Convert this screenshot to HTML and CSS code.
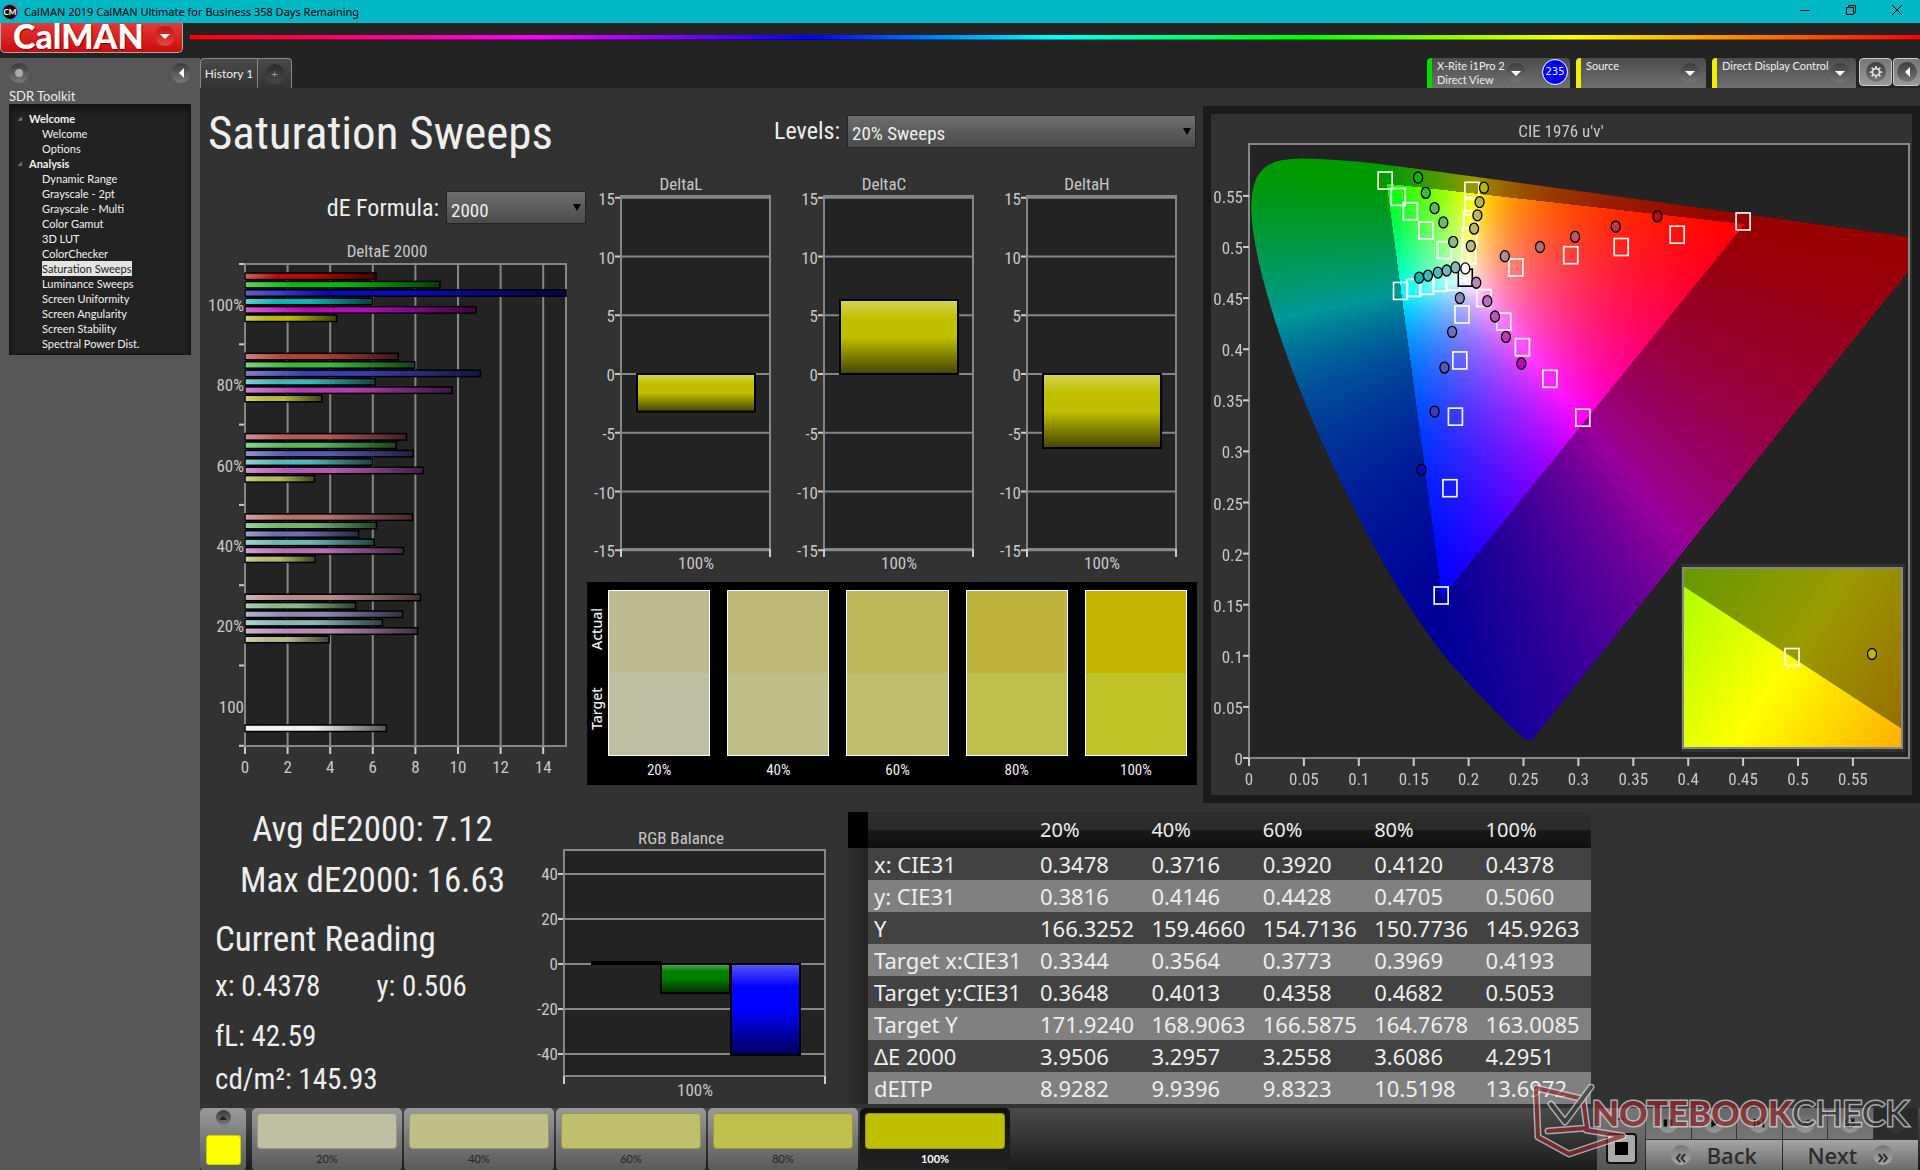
FILE: index.html
```
<!DOCTYPE html>
<html lang="en">
<head>
  <meta charset="UTF-8" />
  <meta name="viewport" content="width=device-width, initial-scale=1.0" />
  <title>CalMAN 2019 CalMAN Ultimate for Business</title>
  <link rel="stylesheet" href="styles.css">
</head>
<body>

<header class="titlebar">
  <svg class="app-icon" viewBox="0 0 16 16" aria-hidden="true">
    <circle cx="8" cy="8" r="8" fill="#7a4fd0"/>
    <path d="M8 0a8 8 0 0 1 8 8H8z" fill="#d8508a"/>
    <path d="M0 8a8 8 0 0 0 8 8V8z" fill="#3fb86a"/>
    <circle cx="8" cy="8" r="7" fill="#111"/>
    <text x="8" y="11" text-anchor="middle">CM</text>
  </svg>
  <span class="titlebar-text">CalMAN 2019 CalMAN Ultimate for Business 358 Days Remaining</span>
  <div class="window-buttons">
    <button aria-label="Minimize"><svg viewBox="0 0 12 12"><path d="M1 6.500h10"/></svg></button>
    <button aria-label="Restore"><svg viewBox="0 0 12 12"><path d="M1.500 3.500h7v7h-7zM3.500 3.500v-2h7v7h-2"/></svg></button>
    <button aria-label="Close"><svg viewBox="0 0 12 12"><path d="M1 1l10 10M11 1L1 11"/></svg></button>
  </div>
</header>

<div class="brandbar">
  <button class="brand">CalMAN<span class="round red"><i class="tri down"></i></span></button>
  <div class="rainbow"></div>
</div>

<div class="main">
  <aside class="sidebar">
    <div class="sidebar-top">
      <span class="round"><i class="dot"></i></span>
      <button class="round" aria-label="Collapse"><i class="tri left"></i></button>
    </div>
    <h2>SDR Toolkit</h2>
    <nav class="tree">
      <h3>Welcome</h3>
      <a href="#">Welcome</a>
      <a href="#">Options</a>
      <h3>Analysis</h3>
      <a href="#">Dynamic Range</a>
      <a href="#">Grayscale - 2pt</a>
      <a href="#">Grayscale - Multi</a>
      <a href="#">Color Gamut</a>
      <a href="#">3D LUT</a>
      <a href="#">ColorChecker</a>
      <a href="#" class="active">Saturation Sweeps</a>
      <a href="#">Luminance Sweeps</a>
      <a href="#">Screen Uniformity</a>
      <a href="#">Screen Angularity</a>
      <a href="#">Screen Stability</a>
      <a href="#">Spectral Power Dist.</a>
    </nav>
  </aside>

  <div class="content">
    <div class="tabs">
      <button class="tab">History 1</button>
      <button class="tab tab-add" aria-label="Add tab"><span class="round">+</span></button>
      <div class="devices">
        <button class="device meter"><span>X-Rite i1Pro 2<br>Direct View</span><span class="round"><i class="tri down"></i></span><b>235</b></button>
        <button class="device source"><span>Source</span><span class="round"><i class="tri down"></i></span></button>
        <button class="device display"><span>Direct Display Control</span><span class="round"><i class="tri down"></i></span></button>
        <button class="tool" aria-label="Settings"><span class="round"><svg viewBox="0 0 16 16"><circle cx="8" cy="8" r="4" fill="none" stroke="#ddd" stroke-width="2"/><path d="M8 1v3M8 12v3M1 8h3M12 8h3M3 3l2 2M11 11l2 2M13 3l-2 2M5 11l-2 2" stroke="#ddd" stroke-width="2"/></svg></span></button>
        <button class="tool tool-end" aria-label="Collapse panel"><span class="round"><i class="tri left"></i></span></button>
      </div>
    </div>

    <div class="workspace">
      <div class="upper">
        <div class="sweeps">
          <div class="heading">
            <h1>Saturation Sweeps</h1>
            <div class="field levels">
              <label for="levels">Levels:</label>
              <div class="select"><select id="levels"><option>20% Sweeps</option></select></div>
            </div>
          </div>
          <div class="sweep-columns">
            <div class="col-delta-e">
              <div class="field formula">
                <label for="formula">dE Formula:</label>
                <div class="select"><select id="formula"><option>2000</option></select></div>
              </div>
              <svg id="deltaE" class="chart" viewBox="0 0 387 549"></svg>
            </div>
            <div class="col-lch">
              <svg id="deltaLCH" class="chart" viewBox="0 0 616 403"></svg>
              <div class="swatches">
                <div class="swatch-side"><span>Actual</span><span>Target</span></div>
                <figure><div class="swatch s20"></div><figcaption>20%</figcaption></figure>
                <figure><div class="swatch s40"></div><figcaption>40%</figcaption></figure>
                <figure><div class="swatch s60"></div><figcaption>60%</figcaption></figure>
                <figure><div class="swatch s80"></div><figcaption>80%</figcaption></figure>
                <figure><div class="swatch s100"></div><figcaption>100%</figcaption></figure>
              </div>
            </div>
          </div>
        </div>
        <div class="cie">
          <canvas id="cieColors" width="701" height="681"></canvas>
          <svg id="cieChart" class="chart" viewBox="0 0 701 681"></svg>
        </div>
      </div>

      <div class="lower">
        <div class="readings">
          <p class="big center">Avg dE2000: 7.12</p>
          <p class="big center">Max dE2000: 16.63</p>
          <p class="big current">Current Reading</p>
          <p class="xy"><span>x: 0.4378</span><span>y: 0.506</span></p>
          <p class="fl">fL: 42.59</p>
          <p>cd/m²: 145.93</p>
        </div>
        <svg id="rgbBalance" class="chart" viewBox="0 0 318 305"></svg>
        <table class="data">
          <thead>
            <tr><th class="grip"></th><th class="name"></th><th>20%</th><th>40%</th><th>60%</th><th>80%</th><th>100%</th></tr>
          </thead>
          <tbody>
            <tr><td class="grip"></td><th>x: CIE31</th><td>0.3478</td><td>0.3716</td><td>0.3920</td><td>0.4120</td><td>0.4378</td></tr>
            <tr><td class="grip"></td><th>y: CIE31</th><td>0.3816</td><td>0.4146</td><td>0.4428</td><td>0.4705</td><td>0.5060</td></tr>
            <tr><td class="grip"></td><th>Y</th><td>166.3252</td><td>159.4660</td><td>154.7136</td><td>150.7736</td><td>145.9263</td></tr>
            <tr><td class="grip"></td><th>Target x:CIE31</th><td>0.3344</td><td>0.3564</td><td>0.3773</td><td>0.3969</td><td>0.4193</td></tr>
            <tr><td class="grip"></td><th>Target y:CIE31</th><td>0.3648</td><td>0.4013</td><td>0.4358</td><td>0.4682</td><td>0.5053</td></tr>
            <tr><td class="grip"></td><th>Target Y</th><td>171.9240</td><td>168.9063</td><td>166.5875</td><td>164.7678</td><td>163.0085</td></tr>
            <tr><td class="grip"></td><th>ΔE 2000</th><td>3.9506</td><td>3.2957</td><td>3.2558</td><td>3.6086</td><td>4.2951</td></tr>
            <tr><td class="grip"></td><th>dEITP</th><td>8.9282</td><td>9.9396</td><td>9.8323</td><td>10.5198</td><td>13.6972</td></tr>
          </tbody>
        </table>
      </div>
    </div>

    <footer class="bottombar">
      <button class="pattern-toggle" aria-label="Pattern"><span class="round"><i class="tri up"></i></span><i class="chip"></i></button>
      <button class="level l20"><i></i>20%</button>
      <button class="level l40"><i></i>40%</button>
      <button class="level l60"><i></i>60%</button>
      <button class="level l80"><i></i>80%</button>
      <button class="level l100 active"><i></i>100%</button>
      <div class="controls">
        <button class="stop" aria-label="Stop"><i class="tri up"></i><span><i></i></span></button>
        <div class="control-grid">
          <div class="transport">
            <button aria-label="Pause"><span class="round"><svg viewBox="0 0 16 16"><path d="M3 4h4v8H3zM9 4h4v8H9z"/></svg></span></button>
            <button aria-label="Read"><span class="round"><svg viewBox="0 0 16 16"><path d="M5 3l8 5-8 5z"/></svg></span></button>
            <button aria-label="Read series"><span class="round"><svg viewBox="0 0 16 16"><path d="M2 3h2v10H2zM12 3h2v10h-2zM6 4l4 4-4 4z"/></svg></span></button>
            <button aria-label="Continuous"><span class="round"><svg viewBox="0 0 16 16"><path d="M8 8C5 3 1 5 1 8s4 5 7 0 7-3 7 0-4 5-7 0z" fill="none" stroke="#333" stroke-width="2"/></svg></span></button>
            <button aria-label="Refresh"><span class="round"><svg viewBox="0 0 16 16"><path d="M3 8a5 5 0 0 1 9-3M13 8a5 5 0 0 1-9 3" fill="none" stroke="#333" stroke-width="2"/><path d="M13 2v5H8zM3 14V9h5z"/></svg></span></button>
            <button class="off" aria-label="Empty"><span class="round"></span></button>
          </div>
          <div class="steps">
            <button><span class="round">«</span>Back</button>
            <button>Next<span class="round">»</span></button>
          </div>
        </div>
      </div>
    </footer>
  </div>
</div>

<svg class="watermark" viewBox="0 0 390 86">
  <g fill="none" stroke-linejoin="round" stroke-linecap="round">
    <path d="M53 15L6 4l2 49 31 17 54-18-37-6M53 15l4 29-39 3" stroke="#ddd" stroke-width="7"/>
    <path d="M53 15L6 4l2 49 31 17 54-18-37-6M53 15l4 29-39 3" stroke="#8f2a2e" stroke-width="4"/>
    <path d="M21 20l14 18 26-35" stroke="#ddd" stroke-width="7"/>
    <path d="M21 20l14 18 26-35" stroke="#3c3c3c" stroke-width="4"/>
  </g>
  <text x="62" y="42" class="wm-notebook">NOTEBOOK</text>
  <text x="262" y="42" class="wm-check">CHECK</text>
</svg>

<script src="script.js"></script>
</body>
</html>
```
FILE: styles.css
```
* {
  box-sizing: border-box;
}
body {
  margin: 0;
  min-height: 100vh;
  display: flex;
  flex-direction: column;
  background: #232323;
  color: #eee;
  font-family: Lato, sans-serif;
  font-size: 12px;
  overflow-x: hidden;
  position: relative;
}
h1, h2, h3, p, figure {
  margin: 0;
  font-weight: normal;
}
button {
  font: inherit;
  color: inherit;
  border: 0;
  padding: 0;
  background: none;
}

/* window title */
.titlebar {
  height: 23px;
  display: flex;
  align-items: center;
  background: #00b7c6;
  color: #000;
  font-family: "Noto Sans", sans-serif;
  font-size: 11px;
  padding-left: 2px;
}
.app-icon {
  width: 16px;
  height: 16px;
  margin-right: 6px;
}
.app-icon text {
  font: bold 8px Lato, sans-serif;
  fill: #fff;
}
.window-buttons {
  margin-left: auto;
  display: flex;
}
.window-buttons button {
  width: 46px;
  height: 23px;
}
.window-buttons svg {
  width: 12px;
  height: 12px;
  fill: none;
  stroke: #000;
}

/* logo and rainbow line */
.brandbar {
  height: 35px;
  display: flex;
}
.brand {
  width: 183px;
  height: 30px;
  display: flex;
  align-items: center;
  justify-content: space-between;
  padding: 0 7px 3px 12px;
  border: 1px solid #aaa;
  border-top: 0;
  border-radius: 0 0 5px 5px;
  background: linear-gradient(#e23a3a, #cc0c0c);
  color: #fff;
  font-family: Lato, sans-serif;
  font-weight: 900;
  font-size: 34px;
  line-height: 26px;
  text-shadow: 1px 1px 1px #800;
}
.rainbow {
  flex: 1;
  height: 5px;
  margin: 12px 0 0 7px;
  background: linear-gradient(to right, #f00, #f0f 20%, #00f 36%, #0ff 50%, #0f0 64%, #ff0 80%, #f00);
  border-bottom: 1px solid rgba(0, 0, 0, 0.4);
}

/* little round buttons with arrows */
.round {
  width: 20px;
  height: 20px;
  flex: none;
  display: inline-flex;
  align-items: center;
  justify-content: center;
  border-radius: 50%;
  background: linear-gradient(#3c3c3c, #777);
}
.round.red {
  background: linear-gradient(#b81414, #e64545);
}
.round svg {
  width: 14px;
  height: 14px;
}
.tri {
  border: 5px solid transparent;
}
.tri.down {
  border-top-color: #fff;
  border-bottom-width: 0;
}
.tri.up {
  border-width: 4px;
  border-bottom-color: #222;
  border-top-width: 0;
}
.tri.left {
  border-right-color: #fff;
  border-left-width: 0;
}
.dot {
  width: 8px;
  height: 8px;
  border-radius: 50%;
  background: #aaa;
}

/* sidebar */
.main {
  flex: 1;
  display: flex;
}
.sidebar {
  width: 200px;
  flex: none;
  background: #575757;
  padding: 5px 9px;
}
.sidebar-top {
  display: flex;
  justify-content: space-between;
}
.sidebar h2 {
  font-size: 13px;
  line-height: 16px;
  margin-top: 5px;
}
.tree {
  height: 251px;
  width: 182px;
  padding: 6px 0 0 32px;
  background: #222;
  border: 1px solid #161616;
  box-shadow: inset 0 4px 6px #111;
}
.tree h3,
.tree a {
  display: block;
  width: fit-content;
  font-size: 11px;
  line-height: 15px;
  color: #f2f2f2;
  text-decoration: none;
}
.tree h3 {
  font-weight: bold;
  margin-left: -13px;
}
.tree h3::before {
  content: "◢";
  float: left;
  margin-left: -11px;
  font-size: 5px;
  color: #777;
}
.tree .active {
  background: #e4e4e4;
  color: #222;
}

/* tab row */
.content {
  flex: 1;
  min-width: 0;
  display: flex;
  flex-direction: column;
}
.tabs {
  height: 30px;
  display: flex;
}
.tab {
  width: 58px;
  border: 1px solid #888;
  border-bottom: 0;
  border-radius: 4px 0 0 0;
  background: linear-gradient(#4a4a4a, #333);
}
.tab-add {
  width: 34px;
  border-left: 0;
  border-radius: 0 4px 0 0;
  color: #999;
}
.tab-add .round {
  background: linear-gradient(#2c2c2c, #484848);
}
.devices {
  margin-left: auto;
  display: flex;
  gap: 6px;
}
.device {
  width: 130px;
  display: flex;
  align-items: flex-start;
  justify-content: space-between;
  padding: 1px 6px 0 5px;
  border-left: 5px solid #ee0;
  border-radius: 4px 4px 0 0;
  background: linear-gradient(#4c4c4c, #707070);
  font-size: 11px;
  line-height: 14px;
  text-align: left;
}
.device .round {
  margin-top: 4px;
}
.display {
  width: 144px;
}
.meter {
  width: 143px;
  border-left-color: #0d0;
  padding-right: 2px;
}
.meter .round {
  margin-left: auto;
  margin-right: 16px;
}
.meter b {
  width: 26px;
  height: 26px;
  border: 1px solid #fff;
  border-radius: 50%;
  background: #00f;
  font: 10px/24px "DejaVu Sans", sans-serif;
  text-align: center;
}
.tool {
  width: 33px;
  height: 28px;
  border: 1px solid #ccc;
  border-radius: 4px;
  background: linear-gradient(#777, #999);
  margin-left: -3px;
}
.tool-end {
  width: 27px;
  margin-left: -5px;
  border-right: 0;
}

/* workspace */
.workspace {
  flex: 1;
  background: #323232;
  font-family: "Roboto Condensed", Roboto, sans-serif;
}
.upper {
  display: grid;
  grid-template-columns: 1003fr 717fr;
  align-items: start;
}
.heading {
  display: flex;
  align-items: center;
  justify-content: space-between;
  padding: 14px 7px 0 8px;
  height: 72px;
}
h1 {
  padding-top: 3px;
  font-size: 47px;
  line-height: 55px;
}
.field {
  display: flex;
  align-items: center;
  justify-content: flex-end;
  gap: 7px;
  font-size: 24px;
}
.levels {
  width: 43%;
}
.levels .select {
  flex: 1;
}
.formula {
  padding-right: 1px;
}
.formula .select {
  width: 140px;
}
.select {
  position: relative;
}
.select::after {
  content: "";
  position: absolute;
  right: 5px;
  top: 13px;
  border: 4px solid transparent;
  border-top: 7px solid #000;
  border-bottom-width: 0;
}
.levels .select {
  max-width: 349px;
}
select {
  appearance: none;
  width: 100%;
  height: 33px;
  padding: 5px 4px 0;
  border: 1px solid #242424;
  border-radius: 0;
  background: linear-gradient(#6e6e6e, #4a4a4a);
  color: #eee;
  font-family: inherit;
  font-size: 19px;
}
.chart {
  display: block;
  width: 100%;
  height: auto;
}
.chart text {
  font-size: 17px;
  fill: #c8c8c8;
}
.sweep-columns {
  display: grid;
  grid-template-columns: 387fr 616fr;
}
.col-delta-e {
  padding-top: 31px;
}
.col-delta-e .chart {
  margin-top: 12px;
}
.col-lch {
  padding-top: 12px;
}
.swatches {
  display: flex;
  gap: 17px;
  height: 203px;
  margin: 7px 6px 0 0;
  padding: 8px 10px 0 0;
  background: #000;
}
.swatch-side {
  width: 21px;
  margin-right: -17px;
  padding-top: 37px;
  writing-mode: vertical-rl;
  transform: rotate(180deg);
  display: flex;
  flex-direction: row-reverse;
  justify-content: space-around;
  font: 500 14px "Noto Sans", sans-serif;
}
.swatches figure {
  flex: 1;
  text-align: center;
}
.swatch {
  height: 166px;
  border: 1px solid #fff;
  background: linear-gradient(var(--actual) 50%, var(--target) 50%);
}
.swatches figcaption {
  font-size: 15px;
  line-height: 28px;
}
.s20 { --actual: #bfbb90; --target: #bfbfa4; }
.s40 { --actual: #c0b877; --target: #c0bf88; }
.s60 { --actual: #c0b65c; --target: #bfbf6c; }
.s80 { --actual: #c0b43c; --target: #bfc04c; }
.s100 { --actual: #c2b400; --target: #c1c228; }
.cie {
  position: relative;
  margin-top: 18px;
  border: 8px solid #1a1a1a;
}
.cie canvas {
  position: absolute;
  width: 100%;
  height: 100%;
}
.cie .chart {
  position: relative;
}

/* readings and table */
.lower {
  display: grid;
  grid-template-columns: 330fr 318fr 743fr 329fr;
  align-items: start;
}
.readings {
  padding: 1px 0 0 15px;
  font-size: 29px;
  line-height: 43px;
}
.readings .big {
  font-size: 35px;
  line-height: 51px;
}
.center {
  text-align: center;
}
.readings .current {
  margin-top: 8px;
}
.xy {
  display: flex;
  gap: 56px;
}
.fl {
  margin-top: 7px;
}
.data {
  width: 100%;
  margin-top: 9px;
  border-collapse: collapse;
  table-layout: fixed;
  font: 22px/32px "Noto Sans", sans-serif;
}
.data th,
.data td {
  padding: 0 0 0 6px;
  height: 32px;
  font-weight: normal;
  text-align: left;
  white-space: nowrap;
}
.data thead th {
  height: 36px;
  font-size: 20px;
  background: linear-gradient(#2e2e2e, #2a2a2a 49%, #181818 50%, #101010);
}
.data .grip {
  width: 20px;
  background: linear-gradient(to right, #2e2e2e, #242424);
}
.data thead .grip {
  background: #000;
}
.data .name {
  width: 166px;
}
.data tbody tr {
  background: #424242;
}
.data tbody tr:nth-child(even) {
  background: #808080;
}

/* bottom bar */
.bottombar {
  height: 62px;
  display: flex;
  gap: 2px;
  background: linear-gradient(#4a4a4a, #1c1c1c);
}
.bottombar > button {
  border-radius: 5px 5px 3px 3px;
  background: linear-gradient(#999, #5a5a5a);
}
.pattern-toggle {
  width: 46px;
  margin-right: 4px;
  display: flex;
  flex-direction: column;
  align-items: center;
  justify-content: space-between;
  padding: 2px 0 5px;
}
.pattern-toggle .round {
  width: 15px;
  height: 15px;
}
.chip {
  width: 35px;
  height: 30px;
  border-radius: 3px;
  background: #ff0;
  border: 1px solid #cc0;
}
.level {
  width: 150px;
  padding: 2px 5px;
  color: #222;
  font-size: 11px;
}
.level i {
  display: block;
  height: 36px;
  margin-bottom: 3px;
  border-radius: 4px;
  border: 1px solid rgba(0, 0, 0, 0.2);
}
.l20 i { background: #bfbfa4; }
.l40 i { background: #c0bf88; }
.l60 i { background: #bfbf6c; }
.l80 i { background: #bfc04c; }
.l100 i { background: #bfbf00; }
.bottombar .level.active {
  background: linear-gradient(#111, #222);
  color: #fff;
  font-weight: bold;
}
.controls {
  margin-left: auto;
  display: flex;
  padding-right: 2px;
  gap: 1px;
}
.stop {
  width: 48px;
  display: flex;
  flex-direction: column;
  align-items: center;
  justify-content: space-between;
  padding: 8px 0 6px;
  background: linear-gradient(#777, #555);
}
.stop span {
  width: 31px;
  height: 31px;
  padding: 7px;
  border: 2px solid #111;
  border-radius: 4px;
  background: #aaa;
}
.stop span i {
  display: block;
  height: 13px;
  background: #000;
}
.control-grid {
  width: 272px;
  display: flex;
  flex-direction: column;
  gap: 1px;
}
.transport,
.steps {
  flex: 1;
  display: flex;
  gap: 1px;
}
.transport button,
.steps button {
  flex: 1;
  display: flex;
  align-items: center;
  justify-content: center;
  background: linear-gradient(#666, #777);
}
.transport .round {
  background: linear-gradient(#666, #999);
}
.transport .off {
  background: #2b2b2b;
}
.transport .off .round {
  background: #333;
}
.steps button {
  gap: 16px;
  background: linear-gradient(#a5a5a5, #6a6a6a);
  color: #2b2b2b;
  font: 500 22px/28px "Noto Sans", sans-serif;
}
.steps .round {
  background: linear-gradient(#777, #aaa);
  line-height: 16px;
}

/* watermark lies over the table and the bottom bar */
.watermark {
  position: absolute;
  right: 0;
  bottom: 0;
  width: 390px;
  opacity: 0.7;
  pointer-events: none;
}
.watermark text {
  font-family: Lato, sans-serif;
  font-size: 35px;
  stroke: #ddd;
  stroke-width: 3px;
  paint-order: stroke;
}
.wm-notebook {
  font-weight: 900;
  fill: #93282c;
}
.wm-check {
  fill: #333;
}
```
FILE: script.js
```
const levels = ['100%', '80%', '60%', '40%', '20%'];

// dE2000 per level: red, green, blue, cyan, magenta, yellow
const deltaE = [
  [6.15, 9.15, 15.1, 6.0, 10.85, 4.3],
  [7.2, 7.97, 11.05, 6.12, 9.73, 3.61],
  [7.58, 7.1, 7.9, 6.0, 8.36, 3.26],
  [7.86, 6.17, 5.33, 6.06, 7.44, 3.3],
  [8.24, 5.19, 7.4, 6.45, 8.1, 3.95]
];
const low = [10, 60, 88, 110, 138];
const hues = [[1, 0, 0], [0, 1, 0], [0, 0, 1], [0, 1, 1], [1, 0, 1], [1, 1, 0]];

function hueColor(hue, level, max = 184) {
  return hues[hue].map(c => c ? max : low[level]);
}
function rgb(c) {
  return 'rgb(' + c.map(Math.round).join(',') + ')';
}
function line(x1, y1, x2, y2, color = '#868686', w = 2) {
  return `<line x1="${x1}" y1="${y1}" x2="${x2}" y2="${y2}" stroke="${color}" stroke-width="${w}"/>`;
}
function text(x, y, s, anchor = 'middle') {
  return `<text x="${x}" y="${y}" text-anchor="${anchor}">${s}</text>`;
}
function frame(x, y, w, h) {
  return `<rect x="${x}" y="${y}" width="${w}" height="${h}" fill="none" stroke="#868686" stroke-width="2"/>`;
}
function back(x, y, w, h) {
  return `<rect x="${x}" y="${y}" width="${w}" height="${h}" fill="#232323"/>`;
}
let gradients = 0;
function bar(x, y, w, h, c, vertical) {
  const id = 'g' + gradients++;
  const light = c.map(v => v + (255 - v) * 0.35);
  const dark = c.map(v => v * 0.35);
  const dir = vertical ? 'x2="0" y2="1"' : 'x2="1" y2="0"';
  return `<linearGradient id="${id}" ${dir}><stop stop-color="${rgb(light)}"/>
    <stop offset="0.25" stop-color="${rgb(c)}"/><stop offset="0.5" stop-color="${rgb(c)}"/>
    <stop offset="1" stop-color="${rgb(dark)}"/></linearGradient>
    <rect x="${x}" y="${y}" width="${w}" height="${h}" fill="url(#${id})" stroke="#000" stroke-width="${vertical ? 2 : 1.5}"/>`;
}

function drawDeltaE() {
  const x0 = 45, y0 = 28, w = 321, h = 482, unit = 21.3;
  let s = text(187, 21, 'DeltaE 2000') + back(x0, y0, w, h);
  for (let v = 0; v <= 14; v += 2) {
    const x = x0 + v * unit;
    s += line(x, y0, x, y0 + h) + line(x, y0 + h, x, y0 + h + 8, '#ccc');
    s += text(x, y0 + h + 27, v);
  }
  for (let i = 0; i <= 6; i++) {
    s += line(x0 - 6, y0 + i * 80.3, x0, y0 + i * 80.3, '#ccc');
  }
  s += frame(x0, y0, w, h);
  levels.concat('100').forEach((l, i) => {
    s += text(x0 - 1, y0 + 47 + i * 80.3, l, 'end');
  });
  deltaE.forEach((row, g) => row.forEach((v, i) => {
    const width = Math.min(v * unit, w);
    s += bar(x0, y0 + 9 + g * 80.3 + i * 8.4, width, 6.5, hueColor(i, g));
  }));
  s += bar(x0, y0 + 461, 6.64 * unit, 6.5, [240, 240, 240]);
  document.getElementById('deltaE').innerHTML = s;
}

function drawLCH() {
  const y0 = 24, h = 353, zero = 202, unit = 11.75;
  let s = '';
  [['DeltaL', -3.2], ['DeltaC', 6.3], ['DeltaH', -6.3]].forEach(([name, v], i) => {
    const x0 = 34 + i * 203, w = 149;
    s += text(x0 + 60, 18, name) + back(x0, y0, w, h);
    for (let t = -15; t <= 15; t += 5) {
      const y = zero - t * unit;
      s += line(x0, y, x0 + w, y) + line(x0 - 6, y, x0, y, '#ccc');
      s += text(x0 - 6, y + 7, t, 'end');
    }
    s += frame(x0, y0, w, h);
    s += line(x0, y0 + h, x0, y0 + h + 8, '#ccc') + line(x0 + w, y0 + h, x0 + w, y0 + h + 8, '#ccc');
    s += bar(x0 + 16, v > 0 ? zero - v * unit : zero, 118, Math.abs(v) * unit, [192, 192, 0], true);
    s += text(x0 + 75, y0 + h + 20, '100%');
  });
  document.getElementById('deltaLCH').innerHTML = s;
}

function drawRGB() {
  const x0 = 34, y0 = 47, w = 261, h = 226, zero = 161, unit = 2.25;
  let s = text(151, 41, 'RGB Balance') + back(x0, y0, w, h);
  for (let t = -40; t <= 40; t += 20) {
    const y = zero - t * unit;
    s += line(x0, y, x0 + w, y) + line(x0 - 6, y, x0, y, '#ccc');
    s += text(x0 - 6, y + 6, t, 'end');
  }
  s += frame(x0, y0, w, h);
  s += line(x0, y0 + h, x0, y0 + h + 8, '#ccc') + line(x0 + w, y0 + h, x0 + w, y0 + h + 8, '#ccc');
  s += `<rect x="61" y="158" width="70" height="4" fill="#000"/>`;
  s += bar(131, zero, 69, 29, [0, 128, 0], true) + bar(201, zero, 69, 91, [0, 0, 255], true);
  s += text(x0 + 131, y0 + h + 20, '100%');
  document.getElementById('rgbBalance').innerHTML = s;
}

// CIE 1976 plot, origin and pixels per unit
const ox = 38, oy = 644, su = 1098, sv = 1022, plotW = 660, plotH = 614;
const px = u => ox + u * su;
const py = v => oy - v * sv;

const locus = [
  [.1741, .0050], [.1714, .0051], [.1644, .0109], [.1566, .0177], [.1440, .0297], [.1355, .0399], [.1241, .0578],
  [.1096, .0868], [.0913, .1327], [.0687, .2007], [.0454, .2950], [.0235, .4127], [.0082, .5384], [.0039, .6548],
  [.0139, .7502], [.0389, .8120], [.0743, .8338], [.1142, .8262], [.1547, .8059], [.2296, .7543], [.3016, .6923],
  [.3731, .6245], [.4441, .5547], [.5125, .4866], [.5752, .4242], [.6270, .3725], [.6658, .3340], [.6915, .3083],
  [.7190, .2809], [.7347, .2653]
];

function colorAt(u, v) {
  const d = 6 * u - 16 * v + 12;
  const x = 9 * u / d, y = 4 * v / d;
  const X = x / y, Z = (1 - x - y) / y;
  let c = [
    3.2406 * X - 1.5372 - 0.4986 * Z,
    -0.9689 * X + 1.8758 + 0.0415 * Z,
    0.0557 * X - 0.2040 + 1.0570 * Z
  ];
  const inside = c.every(n => n >= 0);
  c = c.map(n => Math.max(n, 0));
  const m = Math.max(...c);
  return c.map(n => n / m * (inside ? 255 : 153));
}

function drawCieColors() {
  const ctx = document.getElementById('cieColors').getContext('2d');
  const img = ctx.createImageData(701, 681);
  for (let y = oy - plotH; y < oy; y++) {
    for (let x = ox; x < ox + plotW; x++) {
      const c = colorAt((x - ox) / su, (oy - y) / sv);
      img.data.set([c[0], c[1], c[2], 255], (y * 701 + x) * 4);
    }
  }
  const layer = document.createElement('canvas');
  layer.width = 701;
  layer.height = 681;
  layer.getContext('2d').putImageData(img, 0, 0);

  ctx.fillStyle = '#323232';
  ctx.fillRect(0, 0, 701, 681);
  ctx.fillStyle = '#232323';
  ctx.fillRect(ox, oy - plotH, plotW, plotH);

  const p = locus.map(([x, y]) => {
    const d = -2 * x + 12 * y + 3;
    return [px(4 * x / d), py(9 * y / d)];
  });
  ctx.beginPath();
  ctx.moveTo(p[0][0], p[0][1]);
  for (let i = 1; i < p.length - 1; i++) {
    ctx.quadraticCurveTo(p[i][0], p[i][1], (p[i][0] + p[i + 1][0]) / 2, (p[i][1] + p[i + 1][1]) / 2);
  }
  ctx.lineTo(...p[p.length - 1]);
  ctx.closePath();
  ctx.clip();
  ctx.drawImage(layer, 0, 0);
}

const targets = [
  [.124, .565], [.136, .549], [.147, .535], [.161, .516], [.178, .497],
  [.203, .555], [.203, .540], [.202, .527], [.201, .510], [.200, .492],
  [.450, .525], [.390, .512], [.339, .500], [.293, .492], [.243, .480],
  [.138, .457], [.150, .460], [.162, .462], [.174, .465], [.186, .466],
  [.304, .333], [.274, .371], [.249, .402], [.232, .427], [.214, .450],
  [.175, .159], [.183, .264], [.188, .334], [.192, .389], [.194, .434]
];
// measured points, same hue order as hues, saturated first
const measured = [
  [[.372, .530], [.334, .520], [.297, .510], [.265, .500], [.233, .491]],
  [[.154, .568], [.161, .553], [.169, .538], [.177, .524], [.186, .505]],
  [[.157, .282], [.169, .339], [.178, .382], [.185, .417], [.192, .450]],
  [[.155, .470], [.163, .472], [.172, .475], [.180, .477], [.188, .480]],
  [[.248, .386], [.234, .412], [.224, .432], [.217, .447], [.207, .465]],
  [[.214, .558], [.210, .544], [.208, .531], [.205, .518], [.202, .501]]
];

function square(x, y, color = '#fff') {
  return `<rect x="${x - 7}" y="${y - 8.5}" width="14" height="17" fill="none" stroke="${color}" stroke-width="1.6"/>`;
}
function dot(x, y, fill) {
  return `<ellipse cx="${x}" cy="${y}" rx="4.500" ry="5.500" fill="${fill}" stroke="#000" stroke-width="1.3"/>`;
}

function drawCie() {
  let s = text(350, 23, "CIE 1976 u'v'");
  s += `<rect x="${ox}" y="${oy - plotH}" width="${plotW}" height="${plotH}" fill="none" stroke="#868686" stroke-width="2"/>`;
  for (let i = 0; i <= 11; i++) {
    const label = +(i * 0.05).toFixed(2);
    const x = px(i * 0.05), y = py(i * 0.05);
    s += line(x, oy, x, oy + 8, '#ccc') + text(x, oy + 27, label);
    s += line(ox - 6, y, ox, y, '#ccc') + text(ox - 6, y + 7, label, 'end');
  }
  targets.forEach(([u, v]) => s += square(px(u), py(v)));
  s += square(px(.197), py(.470), '#000');
  measured.forEach((row, h) => row.forEach(([u, v], i) => s += dot(px(u), py(v), rgb(hueColor(h, i)))));
  s += dot(px(.197), py(.479), '#fff');

  // enlarged view round the 100% yellow target
  const stops = (a, b, c) => `<stop stop-color="${a}"/><stop offset="0.5" stop-color="${b}"/><stop offset="1" stop-color="${c}"/>`;
  const axis = 'gradientUnits="userSpaceOnUse" x1="-7" y1="11" x2="225" y2="167"';
  s += `<g transform="translate(472 454)">
    <linearGradient id="inDark" ${axis}>${stops('#649a00', '#9a9a00', '#966c00')}</linearGradient>
    <linearGradient id="inBright" ${axis}>${stops('#a8ff00', '#ffff00', '#ffb000')}</linearGradient>
    <rect x="-2" y="-4" width="224" height="188" fill="#323232"/>
    <rect width="219" height="180" fill="url(#inDark)"/>
    <path d="M0 18L219 161V180H0z" fill="url(#inBright)"/>
    <rect width="219" height="180" fill="none" stroke="#868686" stroke-width="2"/>
    ${square(109, 89)}${dot(189, 86, '#b8b80a')}
  </g>`;
  document.getElementById('cieChart').innerHTML = s;
}

drawDeltaE();
drawLCH();
drawRGB();
drawCieColors();
drawCie();
```
